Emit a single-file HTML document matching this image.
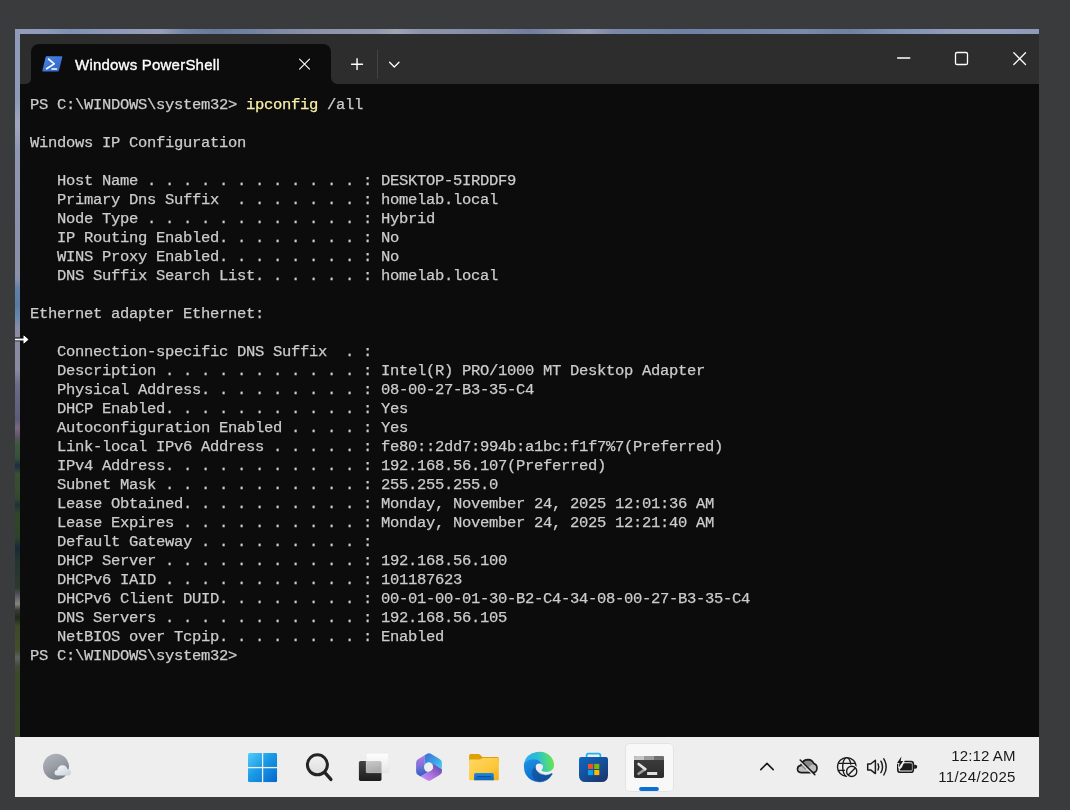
<!DOCTYPE html>
<html>
<head>
<meta charset="utf-8">
<style>
html,body{margin:0;padding:0;}
body{width:1070px;height:810px;background:#3a3b3d;position:relative;overflow:hidden;font-family:"Liberation Sans",sans-serif;}
.abs{position:absolute;}
#topstrip{position:absolute;left:15px;top:29px;width:1024px;height:5px;background:linear-gradient(90deg,#909dbb 0.00%,#8e9bba 2.93%,#7f90b5 5.37%,#8996b7 8.30%,#96a0bb 14.16%,#7484a6 16.60%,#68799c 19.53%,#7282a2 22.95%,#808ba6 26.37%,#8e95ab 30.76%,#9298ac 35.16%,#a0a4b4 37.30%,#8c94ab 39.55%,#8790a9 43.95%,#7d88a5 47.36%,#707d9d 50.29%,#7f8aa8 52.73%,#959db5 55.96%,#7c89a9 58.30%,#7181a5 64.94%,#7583a6 70.80%,#7b89ab 76.66%,#7080a2 81.54%,#7f8fb1 85.45%,#8f9cba 91.31%,#929fbd 95.21%,#8d9bbb 100.00%);}
#leftstrip{position:absolute;left:15px;top:29px;width:5px;height:708px;background:linear-gradient(180deg,#909bb9 0.00%,#8e99b7 10.03%,#a0a8c0 13.56%,#8e97b2 17.09%,#8b91aa 27.68%,#8a90a8 35.17%,#6480a8 36.58%,#5a7aa5 38.98%,#6a86ac 40.82%,#8a8ca4 42.23%,#8a8aa0 48.16%,#686c88 50.28%,#5c5c78 55.23%,#7a6a80 56.36%,#5a5060 57.77%,#3a5a3a 58.62%,#34503a 60.59%,#1c2c42 61.72%,#3a5032 62.85%,#34482e 66.24%,#203038 67.23%,#304828 68.50%,#2c4228 71.89%,#182838 73.31%,#243430 75.00%,#2a3a2a 78.95%,#505058 79.80%,#86867c 81.21%,#3a3a34 82.06%,#202820 83.19%,#3c4a2a 84.32%,#404e2c 87.71%,#5c6464 88.84%,#424a34 89.97%,#3a4a28 91.24%,#38482a 100.00%);}
#win{position:absolute;left:20px;top:34px;width:1019px;height:703px;background:#0c0c0c;}
#titlebar{position:absolute;left:20px;top:34px;width:1019px;height:50px;background:#2d2d2d;}
#tab{position:absolute;left:31px;top:44px;width:300px;height:40px;background:#0c0c0c;border-radius:8px 8px 0 0;}
#tabtitle{position:absolute;left:75px;top:56px;font-size:15px;letter-spacing:0.22px;-webkit-text-stroke:0.35px #fff;line-height:18px;color:#fff;white-space:nowrap;will-change:transform;}
#term{position:absolute;left:30px;top:96px;margin:0;font-family:"Liberation Mono",monospace;font-size:15.5px;letter-spacing:-0.3px;line-height:19px;will-change:transform;color:#cccccc;-webkit-text-stroke:0.25px #cccccc;white-space:pre;}
#term .y{color:#f9f1a5;-webkit-text-stroke:0.25px #f9f1a5;}
#taskbar{position:absolute;left:15px;top:737px;width:1024px;height:60px;background:#eeeeee;}
#clock{position:absolute;left:915px;top:746px;width:100px;text-align:right;font-size:15px;line-height:20px;color:#1a1a1a;white-space:nowrap;will-change:transform;}
</style>
</head>
<body>
<div id="topstrip"></div>
<div id="leftstrip"></div>
<div id="win"></div>
<div id="titlebar"></div>
<div id="tab"></div>
<svg class="abs" style="left:20px;top:34px" width="400" height="50" viewBox="0 0 400 50">
<path d="M5.5 50 H11 V44.5 A5.5 5.5 0 0 1 5.5 50 Z" fill="#0c0c0c"/>
<path d="M311 50 H317.5 A6.5 6.5 0 0 1 311 43.5 Z" fill="#0c0c0c"/>
</svg>
<div id="tabtitle">Windows PowerShell</div>
<svg class="abs" style="left:40px;top:54px" width="26" height="20" viewBox="0 0 26 20">
<defs><linearGradient id="psg" x1="0" y1="0" x2="1" y2="1"><stop offset="0" stop-color="#4a86e8"/><stop offset="1" stop-color="#2f62c4"/></linearGradient></defs>
<path d="M6.6 2.3 H21.6 Q22.6 2.3 22.3 3.3 L19 16.6 Q18.8 17.5 17.8 17.5 H3 Q2.1 17.5 2.4 16.5 L5.6 3.2 Q5.8 2.3 6.6 2.3 Z" fill="url(#psg)"/>
<path d="M8.6 5.2 L14.2 9.9 L6.6 14.7" fill="none" stroke="#fff" stroke-width="1.7" stroke-linecap="round" stroke-linejoin="round"/>
<path d="M12 14.9 H16.6" fill="none" stroke="#fff" stroke-width="1.5" stroke-linecap="round"/>
</svg>
<svg class="abs" style="left:290px;top:50px" width="120" height="30" viewBox="0 0 120 30">
<path d="M9.6 9.2 L19.5 19.1 M19.5 9.2 L9.6 19.1" stroke="#fff" stroke-width="1.1" fill="none" stroke-linecap="round"/>
<path d="M61.6 14.2 H72.5 M67.05 8.7 V19.6" stroke="#fff" stroke-width="1.4" fill="none" stroke-linecap="round"/>
<path d="M87.5 0 V28.5" stroke="#444444" stroke-width="1" fill="none"/>
<path d="M99.6 12.3 L104.3 17 L109 12.3" stroke="#fff" stroke-width="1.3" fill="none" stroke-linecap="round" stroke-linejoin="round"/>
</svg>
<svg class="abs" style="left:890px;top:44px" width="145" height="30" viewBox="0 0 145 30">
<path d="M7.6 14 H19.8" stroke="#fff" stroke-width="1.3" fill="none" stroke-linecap="round"/>
<rect x="65.5" y="8.5" width="12" height="12" rx="1.6" ry="1.6" stroke="#fff" stroke-width="1.3" fill="none"/>
<path d="M123.8 8.8 L135.5 20.5 M135.5 8.8 L123.8 20.5" stroke="#fff" stroke-width="1.3" fill="none" stroke-linecap="round"/>
</svg>
<pre id="term">PS C:\WINDOWS\system32&gt; <span class="y">ipconfig</span> /all

Windows IP Configuration

   Host Name . . . . . . . . . . . . : DESKTOP-5IRDDF9
   Primary Dns Suffix  . . . . . . . : homelab.local
   Node Type . . . . . . . . . . . . : Hybrid
   IP Routing Enabled. . . . . . . . : No
   WINS Proxy Enabled. . . . . . . . : No
   DNS Suffix Search List. . . . . . : homelab.local

Ethernet adapter Ethernet:

   Connection-specific DNS Suffix  . :
   Description . . . . . . . . . . . : Intel(R) PRO/1000 MT Desktop Adapter
   Physical Address. . . . . . . . . : 08-00-27-B3-35-C4
   DHCP Enabled. . . . . . . . . . . : Yes
   Autoconfiguration Enabled . . . . : Yes
   Link-local IPv6 Address . . . . . : fe80::2dd7:994b:a1bc:f1f7%7(Preferred)
   IPv4 Address. . . . . . . . . . . : 192.168.56.107(Preferred)
   Subnet Mask . . . . . . . . . . . : 255.255.255.0
   Lease Obtained. . . . . . . . . . : Monday, November 24, 2025 12:01:36 AM
   Lease Expires . . . . . . . . . . : Monday, November 24, 2025 12:21:40 AM
   Default Gateway . . . . . . . . . :
   DHCP Server . . . . . . . . . . . : 192.168.56.100
   DHCPv6 IAID . . . . . . . . . . . : 101187623
   DHCPv6 Client DUID. . . . . . . . : 00-01-00-01-30-B2-C4-34-08-00-27-B3-35-C4
   DNS Servers . . . . . . . . . . . : 192.168.56.105
   NetBIOS over Tcpip. . . . . . . . : Enabled
PS C:\WINDOWS\system32&gt;</pre>
<div id="taskbar"></div>
<!-- weather -->
<svg class="abs" style="left:40px;top:750px" width="36" height="34" viewBox="0 0 36 34">
<defs>
<linearGradient id="mg" x1="0.2" y1="0" x2="0.7" y2="1"><stop offset="0" stop-color="#b0b5bd"/><stop offset="0.5" stop-color="#989da5"/><stop offset="1" stop-color="#747980"/></linearGradient>
<linearGradient id="cg" x1="0" y1="0" x2="1" y2="1"><stop offset="0" stop-color="#fafbfc"/><stop offset="1" stop-color="#c8cfd9"/></linearGradient>
</defs>
<circle cx="16" cy="16.8" r="13" fill="url(#mg)"/>
<path d="M17.6 25.6 Q14.4 25.4 14.5 22.6 Q14.7 20.2 17.3 20 Q18.2 15.3 22.6 15.2 Q26.4 15.3 27.4 19 Q31 19.2 31 22.4 Q30.9 25.4 27.8 25.6 Z" fill="url(#cg)"/>
</svg>
<!-- start -->
<svg class="abs" style="left:248px;top:753px" width="30" height="30" viewBox="0 0 30 30">
<defs><linearGradient id="wg" x1="0" y1="0" x2="1" y2="1"><stop offset="0" stop-color="#52cdfa"/><stop offset="0.45" stop-color="#1a9ae6"/><stop offset="1" stop-color="#0468cc"/></linearGradient>
<clipPath id="wc"><rect x="0" y="0" width="29.2" height="29.2" rx="1.6"/></clipPath></defs>
<g clip-path="url(#wc)"><rect x="0" y="0" width="29.2" height="29.2" fill="url(#wg)"/>
<rect x="13.95" y="0" width="1.3" height="30" fill="#eeeeee"/><rect x="0" y="13.95" width="30" height="1.3" fill="#eeeeee"/></g>
</svg>
<!-- search -->
<svg class="abs" style="left:300px;top:748px" width="40" height="40" viewBox="0 0 40 40">
<defs><linearGradient id="sg" x1="0" y1="0" x2="0" y2="1"><stop offset="0" stop-color="#f2f2f2"/><stop offset="1" stop-color="#dedede"/></linearGradient></defs>
<circle cx="17.4" cy="16.8" r="10" fill="url(#sg)" stroke="#242424" stroke-width="3"/>
<path d="M24.9 24.6 L30.9 31.4" stroke="#242424" stroke-width="3.3" stroke-linecap="round" fill="none"/>
</svg>
<!-- task view -->
<svg class="abs" style="left:355px;top:750px" width="38" height="34" viewBox="0 0 38 34">
<defs>
<linearGradient id="tvd" x1="0" y1="0" x2="0" y2="1"><stop offset="0" stop-color="#444444"/><stop offset="1" stop-color="#1c1c1c"/></linearGradient>
<linearGradient id="tvo" x1="0" y1="0" x2="0.3" y2="1"><stop offset="0" stop-color="#cbcbcb"/><stop offset="1" stop-color="#aaaaaa"/></linearGradient>
<linearGradient id="tvl" x1="0" y1="0" x2="0" y2="1"><stop offset="0" stop-color="#fefefe"/><stop offset="1" stop-color="#e6e6e6"/></linearGradient>
</defs>
<rect x="3.9" y="10.9" width="22.6" height="20" rx="1.7" fill="url(#tvd)"/>
<rect x="11.1" y="3.2" width="22.7" height="19.6" rx="1.3" fill="url(#tvl)" stroke="#d6d6d6" stroke-opacity="0.6" stroke-width="0.5"/>
<path d="M11.1 10.9 H24.8 Q26.5 10.9 26.5 12.6 V22.8 H12.4 Q11.1 22.8 11.1 21.5 Z" fill="url(#tvo)"/>
</svg>
<!-- copilot 365 -->
<svg class="abs" style="left:412px;top:750px" width="34" height="34" viewBox="0 0 34 34">
<defs>
<linearGradient id="c1" x1="0" y1="0" x2="1" y2="1"><stop offset="0" stop-color="#3a6fd0"/><stop offset="0.5" stop-color="#3f9fe6"/><stop offset="1" stop-color="#52e0fb"/></linearGradient>
<linearGradient id="c2" x1="0.3" y1="0" x2="0.4" y2="1"><stop offset="0" stop-color="#b878e6"/><stop offset="0.5" stop-color="#7a70d8"/><stop offset="1" stop-color="#2a62c0"/></linearGradient>
<linearGradient id="c3" x1="0" y1="1" x2="1" y2="0"><stop offset="0" stop-color="#d292f8"/><stop offset="0.45" stop-color="#a870e0"/><stop offset="1" stop-color="#5e3e98"/></linearGradient>
</defs>
<path d="M12.3 5.6 L15.6 3.6 Q17 2.8 18.4 3.6 L27.6 8.9 Q29.9 10.2 29.9 12.6 V23 L21 17.4 Q20.6 12.6 16.6 12.6 Q13.2 12.8 12.3 16.4 Z" fill="url(#c1)"/>
<path d="M12.3 5.6 L6.4 9 Q4.1 10.3 4.1 12.8 V21.4 Q4.1 23.8 6.2 25 L8.6 26.4 L16.2 22 Q12 21.2 12.2 16.8 Z" fill="url(#c2)"/>
<path d="M8.6 26.4 L15.6 30.4 Q17 31.2 18.4 30.4 L27.6 25.1 Q29.9 23.8 29.9 21.6 V19.4 L21 13.8 Q22.4 20.6 16.6 21.7 Z" fill="url(#c3)"/>
<circle cx="16.6" cy="16.8" r="4.3" fill="#eeeeee"/>
</svg>
<!-- explorer -->
<svg class="abs" style="left:467px;top:751px" width="34" height="32" viewBox="0 0 34 32">
<defs>
<linearGradient id="fg" x1="0" y1="0" x2="1" y2="1"><stop offset="0" stop-color="#ffd866"/><stop offset="0.6" stop-color="#fcc83a"/><stop offset="1" stop-color="#f3b112"/></linearGradient>
<linearGradient id="fb" x1="0" y1="0" x2="0" y2="1"><stop offset="0" stop-color="#1f8ae0"/><stop offset="1" stop-color="#0a64bc"/></linearGradient>
</defs>
<path d="M2.1 4.8 Q2.1 3.1 3.8 3.1 H11.4 Q12.4 3.1 13.1 3.8 L15.4 6 H30.4 Q31.8 6 31.8 7.4 V12 H2.1 Z" fill="#dfa006"/>
<path d="M2.1 9.6 Q2.1 8.4 3.3 8.4 H12 Q13 8.4 13.8 7.9 L14.6 7.4 Q15.2 7.1 16 7.1 H30.6 Q31.8 7.1 31.8 8.3 V28.2 Q31.8 29.3 30.7 29.3 H3.2 Q2.1 29.3 2.1 28.2 Z" fill="url(#fg)"/>
<path d="M7.1 29.3 V23.6 Q7.1 21.9 8.8 21.9 H25.1 Q26.8 21.9 26.8 23.6 V29.3 Z" fill="url(#fb)"/>
<path d="M10.6 25.6 H23.4" stroke="#0b4f9e" stroke-width="1.1" stroke-linecap="round"/>
</svg>
<!-- edge -->
<svg class="abs" style="left:522px;top:750px" width="34" height="34" viewBox="0 0 34 34">
<defs>
<linearGradient id="e1" x1="0" y1="0.55" x2="1" y2="0.45"><stop offset="0" stop-color="#2fa8f2"/><stop offset="0.45" stop-color="#2abcd6"/><stop offset="0.72" stop-color="#46d494"/><stop offset="1" stop-color="#6ee44a"/></linearGradient>
<linearGradient id="e2" x1="0.2" y1="0" x2="0.6" y2="1"><stop offset="0" stop-color="#1c94e4"/><stop offset="1" stop-color="#0a66c6"/></linearGradient>
<linearGradient id="e3" x1="0" y1="0" x2="1" y2="1"><stop offset="0" stop-color="#155cb0"/><stop offset="1" stop-color="#0e4c98"/></linearGradient>
</defs>
<path d="M2 13.5 Q4.5 9 10.5 8.6 Q17.4 8.4 20.6 15 L17.2 17.2 L13.5 16.8 Q9 22 12 28 Q14 31 17 32 Q8.4 32 3.8 24.6 Q1.4 19.6 2 13.5 Z" fill="url(#e2)"/>
<path d="M13.7 16 Q13.2 19.4 15 21.2 Q17.8 24.6 23.6 25.2 Q27.2 25.1 29.5 23.5 Q30.5 23.2 30.1 24.3 Q26 31.8 17 32 Q12.4 30.6 10.6 26.4 Q8.8 21 13.7 16 Z" fill="url(#e3)" stroke="#1259ac" stroke-width="0.5" stroke-linejoin="round"/>
<path d="M2 13.6 Q3.4 4.2 14.6 2 Q24.2 0.6 29.6 7.6 Q33 12.6 31.7 17.6 Q30 21.7 24.6 21.9 Q20.4 21.8 19.1 19.9 Q21.3 18.2 20.6 15.6 Q19 9.4 11.4 9.2 Q5.2 9.6 2 13.6 Z" fill="url(#e1)"/>
<circle cx="17.2" cy="17.1" r="3.5" fill="#eeeeee"/>
</svg>
<!-- store -->
<svg class="abs" style="left:576px;top:750px" width="36" height="34" viewBox="0 0 36 34">
<defs><linearGradient id="st" x1="0.1" y1="0" x2="0.9" y2="1"><stop offset="0" stop-color="#0f66c2"/><stop offset="0.5" stop-color="#154f98"/><stop offset="1" stop-color="#1c346a"/></linearGradient></defs>
<path d="M10.6 8.6 V5.4 Q10.6 3.6 12.4 3.6 H22.6 Q24.4 3.6 24.4 5.4 V8.6" fill="none" stroke="#1eb2fa" stroke-width="1.7"/>
<path d="M3 9.2 Q3 7 5.2 7 H29.8 Q32 7 32 9.2 V25.4 Q32 32 25.4 32 H9.6 Q3 32 3 25.4 Z" fill="url(#st)"/>
<rect x="12" y="13.9" width="5.1" height="5.1" fill="#f25022"/><rect x="18.2" y="13.9" width="5.1" height="5.1" fill="#7fba00"/>
<rect x="12" y="20" width="5.1" height="5.1" fill="#00a4ef"/><rect x="18.2" y="20" width="5.1" height="5.1" fill="#ffb900"/>
</svg>
<!-- terminal active -->
<div class="abs" style="left:624.5px;top:742.5px;width:49px;height:49px;background:#f8f8f8;border-radius:5px;box-shadow:0 0 0 1px #e3e3e3 inset;"></div>
<svg class="abs" style="left:630px;top:752px" width="38" height="42" viewBox="0 0 38 42">
<defs><linearGradient id="tb" x1="0" y1="0" x2="0" y2="1"><stop offset="0" stop-color="#3e3e3e"/><stop offset="1" stop-color="#2c2c2c"/></linearGradient>
<clipPath id="tc"><rect x="4" y="4" width="30" height="22" rx="1.8"/></clipPath></defs>
<g clip-path="url(#tc)"><rect x="4" y="4" width="30" height="22" fill="url(#tb)"/>
<rect x="4" y="4" width="10" height="4" fill="#c6c6c6"/><rect x="14" y="4" width="10" height="4" fill="#9b9b9b"/><rect x="24" y="4" width="10" height="4" fill="#6f6f6f"/></g>
<path d="M8.6 21.8 L15.2 17.1" stroke="#9e9e9e" stroke-width="2.6" stroke-linecap="round" fill="none"/>
<path d="M8.6 12 L15.2 17.1" stroke="#e2e2e2" stroke-width="2.6" stroke-linecap="round" fill="none"/>
<rect x="17.1" y="20" width="10.1" height="3" fill="#e0e0e0"/>
<rect x="9.1" y="35" width="19.8" height="3.9" rx="1.95" fill="#0a6fd2"/>
</svg>
<!-- tray -->
<svg class="abs" style="left:755px;top:752px" width="170" height="30" viewBox="0 0 170 30">
<g fill="none" stroke="#1a1a1a" stroke-linecap="round" stroke-linejoin="round">
<path d="M5.8 17.6 L12 11.4 L18.2 17.6" stroke-width="1.6"/>
</g>
<!-- onedrive -->
<path d="M46.2 20.6 Q42.4 20.4 42.5 16.8 Q42.8 13.8 45.8 13.4 Q47.6 7.6 53.2 7.6 Q57.4 7.8 58.8 11.6 Q62 12.4 62 16.2 Q61.8 20.4 58 20.6 Z" fill="#bdbdbd"/>
<path d="M45.8 13.4 Q47.6 7.6 53.2 7.6 Q57.4 7.8 58.8 11.6 L50 17.4 Z" fill="#8a8a8a"/>
<path d="M46.2 20.6 Q42.4 20.4 42.5 16.8 Q42.8 13.8 45.8 13.4 Q47.6 7.6 53.2 7.6 Q57.4 7.8 58.8 11.6 Q62 12.4 62 16.2 Q61.8 20.4 58 20.6 Z" fill="none" stroke="#1a1a1a" stroke-width="1.6"/>
<path d="M43.9 8.3 L59.3 23.7" stroke="#eeeeee" stroke-width="1.6"/>
<path d="M45.2 8 L59.8 22.6" stroke="#1a1a1a" stroke-width="1.5" stroke-linecap="round"/>
<!-- globe -->
<g fill="none" stroke="#1a1a1a" stroke-width="1.35">
<circle cx="91.8" cy="14.9" r="9.3"/>
<ellipse cx="91.8" cy="14.9" rx="4.1" ry="9.3"/>
<path d="M83.4 11.3 H100.2 M83.4 18.4 H100.2"/>
</g>
<circle cx="96.7" cy="19.4" r="6.9" fill="#eeeeee"/>
<circle cx="96.7" cy="19.4" r="5.1" fill="#eeeeee" stroke="#1a1a1a" stroke-width="1.35"/>
<path d="M93.2 22.9 L100.2 15.9" stroke="#1a1a1a" stroke-width="1.35"/>
<!-- volume -->
<g fill="none" stroke="#1a1a1a" stroke-width="1.45" stroke-linejoin="round" stroke-linecap="round">
<path d="M112.7 12 H115.6 L120.4 8.2 V21.6 L115.6 17.9 H112.7 Z"/>
<path d="M123 11.8 Q124.6 14.9 123 18"/>
<path d="M125.9 9.2 Q129.2 14.9 125.9 20.6"/>
<path d="M128.8 6.8 Q133.6 14.9 128.8 23"/>
</g>
<!-- battery -->
<g>
<path d="M150 9.5 H156 Q158.3 9.5 158.3 11.8 V17.9 Q158.3 20.2 156 20.2 H145.1 Q142.8 20.2 142.8 17.9 V12.4" fill="none" stroke="#1a1a1a" stroke-width="1.6" stroke-linecap="round"/>
<path d="M159.1 12.7 H160.2 Q162.2 12.8 162.2 14.75 Q162.2 16.7 160.2 16.8 H159.1 Z" fill="#1a1a1a"/>
<path d="M149.4 11.3 H156 Q156.9 11.3 156.9 12.2 V17.7 Q156.9 18.6 156 18.6 H145.4 Q144.5 18.6 144.7 17.8 Q145 16.9 146 16.2 Q146.8 15.6 147.3 14.6 L148.4 12 Q148.7 11.3 149.4 11.3 Z" fill="#1a1a1a"/>
<path d="M146.4 4.6 L142.1 10.9 H144.5 L143.7 15.4 L148.2 9 H145.7 Z" fill="#1a1a1a" stroke="#eeeeee" stroke-width="1.2" paint-order="stroke" stroke-linejoin="round"/>
</g>
</svg>
<div id="clock"><div style="letter-spacing:0.1px;margin-right:-0.5px">12:12 AM</div><div style="letter-spacing:0.36px;position:relative;top:1px;margin-right:-0.8px">11/24/2025</div></div>
<svg class="abs" style="left:15px;top:331px" width="16" height="16" viewBox="0 0 16 16">
<path d="M0 7.7 H8.7 V4.5 L13.3 8.45 L8.7 12.4 V9.2 H0 Z" fill="#fff" stroke="#0a0a0a" stroke-width="2.2" paint-order="stroke" stroke-linejoin="round"/>
<path d="M0 7.7 H8.7 V4.5 L13.3 8.45 L8.7 12.4 V9.2 H0 Z" fill="#fff"/>
</svg>
</body>
</html>
